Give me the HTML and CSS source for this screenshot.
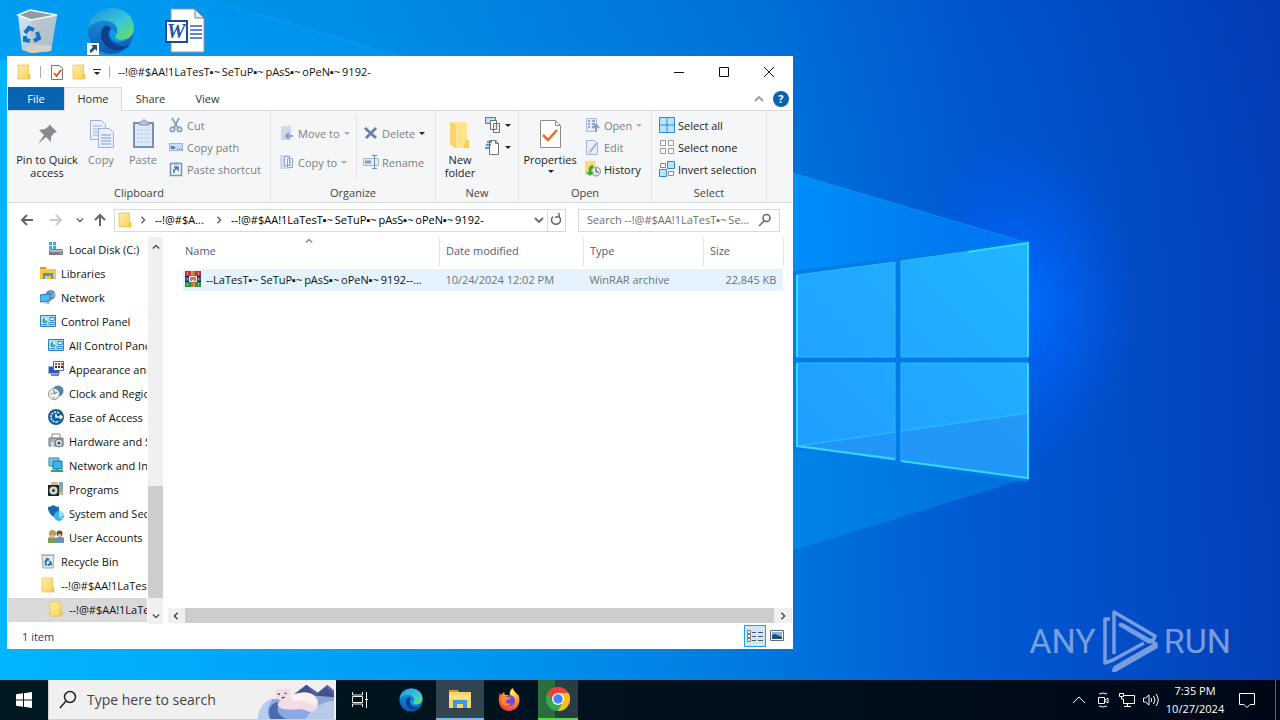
FILE: index.html
```html
<!DOCTYPE html>
<html lang="en">
<head>
<meta charset="utf-8">
<title>File Explorer</title>
<link rel="stylesheet" href="styles.css">
</head>
<body>
<svg width="0" height="0" class="defs" aria-hidden="true">
  <defs>
    <linearGradient id="gEdgeA" x1="0" y1="0" x2="1" y2="1"><stop offset="0" stop-color="#1a8fd8"/><stop offset=".55" stop-color="#36c6e0"/><stop offset="1" stop-color="#6be04a"/></linearGradient>
    <linearGradient id="gEdgeB" x1="0" y1="0" x2="0" y2="1"><stop offset="0" stop-color="#1d9be6"/><stop offset="1" stop-color="#0d58ae"/></linearGradient>
    <linearGradient id="gFold" x1="0" y1="0" x2="1" y2="1"><stop offset="0" stop-color="#ffeda0"/><stop offset="1" stop-color="#f8d160"/></linearGradient>
    <radialGradient id="gFox" cx=".65" cy=".2" r=".9"><stop offset="0" stop-color="#fff04a"/><stop offset=".45" stop-color="#ff9a26"/><stop offset="1" stop-color="#f5264f"/></radialGradient>
    <linearGradient id="gBin" x1="0" y1="0" x2="1" y2="1"><stop offset="0" stop-color="#eef3f6"/><stop offset="1" stop-color="#a9b8c2"/></linearGradient>
  </defs>
  <symbol id="folder" viewBox="0 0 16 16"><path d="M2 1h10.500v9.500H14V15H2z" fill="url(#gFold)" stroke="#e6bd4b" stroke-width=".7"/><path d="M12 10.500h2V15h-3z" fill="#f2c44d"/></symbol>
  <symbol id="edge" viewBox="0 0 48 48">
    <circle cx="24" cy="24" r="23" fill="url(#gEdgeB)"/>
    <path d="M1 22C3 8 13 1 25 1c13 0 22 9 22 20 0 8-6 12-13 12-6 0-7-3-5-5 3-4 1-13-9-14C11 13 3 17 1 22z" fill="url(#gEdgeA)"/>
    <path d="M18 19c-7 5-5 18 6 23 8 3 15 0 19-4-8 3-19 0-21-8-1-4 0-7 2-8-1-2-3-4-6-3z" fill="#0c3f8f"/>
    <path d="M29 28c-2 2-1 5 5 5 2 0 4 0 7-2-3 5-14 6-17 0-2-4-1-8 1-9 3 1 5 3 4 6z" fill="#0a9bea"/>
  </symbol>
  <symbol id="chev" viewBox="0 0 10 10"><path d="M1 3l4 4 4-4" fill="none" stroke="currentColor" stroke-width="1.8"/></symbol>
  <symbol id="panel" viewBox="0 0 16 16"><path d="M.5 2.500h15v11H.5z" fill="#a6e1fb" stroke="#2a7fb8"/><circle cx="5" cy="7.500" r="2.500" fill="#4a9f86"/><path d="M5 7.500V5A2.500 2.500 0 0 1 7.500 7.500z" fill="#fff"/><path d="M10 4.500h4v3h-4zM9 9.500h5v2H9zM2 11.500h5" stroke="#2a8fcb" fill="#eaffff"/></symbol>
</svg>

<main class="desktop">
  <svg class="wallpaper" viewBox="0 0 1280 720" preserveAspectRatio="xMidYMid slice" aria-hidden="true">
    <defs>
      <linearGradient id="wBase"><stop offset="0" stop-color="#00a6f8"/><stop offset=".3" stop-color="#0094ec"/><stop offset=".6" stop-color="#0074dc"/><stop offset=".76" stop-color="#0057d2"/><stop offset="1" stop-color="#033ab6"/></linearGradient>
      <linearGradient id="wBottom" x1="0" y1="0" x2="0" y2="1"><stop offset="0" stop-color="#0040b0" stop-opacity=".1"/><stop offset=".5" stop-color="#00a0ff" stop-opacity=".04"/><stop offset="1" stop-color="#00c0ff" stop-opacity=".04"/></linearGradient>
      <linearGradient id="wLeft"><stop offset="0" stop-color="#00baff" stop-opacity=".9"/><stop offset=".5" stop-color="#00a8ff" stop-opacity=".5"/><stop offset="1" stop-color="#0090ff" stop-opacity="0"/></linearGradient>
      <radialGradient id="wGlow"><stop offset="0" stop-color="#006dff"/><stop offset=".4" stop-color="#0067ff" stop-opacity=".6"/><stop offset="1" stop-color="#005cf0" stop-opacity="0"/></radialGradient>
      <linearGradient id="wBeam"><stop offset="0" stop-color="#00a4ff" stop-opacity=".1"/><stop offset=".4" stop-color="#00a0ff" stop-opacity=".3"/><stop offset=".77" stop-color="#0094ff" stop-opacity=".85"/><stop offset="1" stop-color="#0088ff" stop-opacity=".5"/></linearGradient>
      <linearGradient id="wShade"><stop offset=".3" stop-color="#006fcb" stop-opacity="0"/><stop offset="1" stop-color="#006fcb" stop-opacity=".5"/></linearGradient>
      <linearGradient id="wPane" x1="0" y1="1" x2="1" y2="0"><stop offset="0" stop-color="#1f9cff"/><stop offset="1" stop-color="#21b5ff"/></linearGradient>
    </defs>
    <path d="M0 0h1280v720H0z" fill="url(#wBase)"/>
    <path d="M0 0h1280v720H0z" fill="url(#wBottom)"/>
    <path d="M0 60h12v580h788v80H0z" fill="url(#wLeft)"/>
    <ellipse cx="1020" cy="305" rx="115" ry="170" fill="url(#wGlow)"/>
    <path d="M1028 243L210 0H0v720h240L1028 478z" fill="url(#wBeam)"/>
    <path d="M1028 243L210 0" stroke="#24aaff" stroke-opacity=".4"/>
    <path d="M797 446L1028 478 240 720H0v-80z" fill="url(#wShade)"/>
    <path d="M793 271L1028 240V482L793 450z" fill="#007ce8"/>
    <g fill="url(#wPane)" stroke="#32b7ff"><path d="M797 275l98-13v95h-98zM901 261l127-18v114H901zM797 363h98v97l-98-14zM901 363h127v115l-127-17z"/></g>
    <path d="M797 446l98-14v28zM901 431l127-18v65l-127-17z" fill="#2492f4" fill-opacity=".75"/>
    <path d="M797 446l98-14M901 431l127-18" stroke="#27b8ff" stroke-width="1.500"/>
    <path d="M797 357v-82M797 363v83l98 13M901 461l127 17V363M1028 357V243l-60 9" fill="none" stroke="#35d9ff" stroke-width="2"/>
  </svg>

  <div class="shortcuts">
    <button class="shortcut" aria-label="Recycle Bin"><svg viewBox="0 0 48 48"><path d="M5 8l12-5 27 5-6 36-20 2-9-3z" fill="url(#gBin)" fill-opacity=".9"/><path d="M18 13l26-5-6 36-20 2z" fill="#b6c1c9" fill-opacity=".7"/><path d="M5 8l12-5 27 5-26 5z" fill="#8d9da8" stroke="#f7fafc" stroke-width="1.500"/><path d="M11 42l8-5 20 2-1 5-20 2z" fill="#d7cec4"/><g fill="none" stroke="#1770c4" stroke-width="4"><path d="M12 26l4-5 5 2M24 25l2 6-5 3M17 34l-5-1 0-4"/></g></svg></button>
    <button class="shortcut" aria-label="Microsoft Edge"><svg viewBox="0 0 48 48"><use href="#edge"/><path d="M0 36h12v12H0z" fill="#fff"/><path d="M3 46v-3l3-3-2-2h6v6l-2-2-3 3z" fill="#264a91"/></svg></button>
    <button class="shortcut" aria-label="Word document"><svg viewBox="0 0 48 48"><path d="M10 2h24l9 9v34H10z" fill="#fff" stroke="#8d9aa8"/><path d="M34 2v9h9z" fill="#e4e9ef" stroke="#718090"/><path d="M29 19h12M29 23h12M29 27h12M29 31h12" stroke="#2d63bd" stroke-width="1.500"/><path d="M5 14h21v21H5z" fill="#fff" stroke="#1c4b9d" stroke-width="2"/><text x="15" y="31" class="word">W</text></svg></button>
  </div>

  <div class="brand" aria-label="ANY RUN"><span>ANY</span><svg viewBox="0 0 56 62"><g fill="none" stroke="currentColor" stroke-width="3.500" stroke-linejoin="round"><path d="M8 9H3v44l8-3 31-17M12 44V2l41 24-1 3-5 3L17 14M12 58l42-24-35-20M12 58v3l42-24v-4"/></g></svg><span>RUN</span></div>

  <section class="window" aria-label="File Explorer">
    <header class="titlebar">
      <svg class="i16"><use href="#folder"/></svg><i class="bar"></i>
      <svg class="i16" viewBox="0 0 16 16"><path d="M2.500 1.500h8l3 3v11h-11z" fill="#fff" stroke="#777"/><path d="M5 9l2.500 3L12 6" fill="none" stroke="#e0532a" stroke-width="1.800"/></svg>
      <svg class="i16"><use href="#folder"/></svg>
      <svg class="i8" viewBox="0 0 8 8"><path d="M0 1.500h8" stroke="#222"/><path d="M1 4h6L4 7z" fill="#222"/></svg><i class="bar"></i>
      <h1>--!@#$AA!1LaTesT▪~&thinsp;SeTuP▪~&thinsp;pAsS▪~&thinsp;oPeN▪~&thinsp;9192-</h1>
      <div class="caption">
        <button aria-label="Minimize"><svg viewBox="0 0 12 12"><path d="M1 6.500h10"/></svg></button>
        <button aria-label="Maximize"><svg viewBox="0 0 12 12"><path d="M1.500 1.500h9v9h-9z"/></svg></button>
        <button aria-label="Close"><svg viewBox="0 0 12 12"><path d="M1 1l10 10M11 1L1 11"/></svg></button>
      </div>
    </header>

    <nav class="tabs">
      <button class="file">File</button><button class="on">Home</button><button>Share</button><button>View</button>
      <span class="tabtools"><button aria-label="Collapse ribbon"><svg class="i10 flip"><use href="#chev"/></svg></button><button class="help" aria-label="Help">?</button></span>
    </nav>

    <div class="ribbon">
      <section class="group clip">
        <div class="tools">
          <button class="big pin"><svg viewBox="0 0 32 32"><path d="M18 6l8 8-3 1-3 4v5l-5-5-8 7 6-9-5-5 6-1 4-3z" fill="#858b91"/></svg><span>Pin to Quick<br>access</span></button>
          <button class="big off"><svg viewBox="0 0 32 32"><g fill="#e9f0fb" stroke="#9fb2d2"><path d="M5.500 2.500h11l4 4v15h-15z"/><path d="M8 8h9M8 11h9M8 14h5M8 17h5"/><path d="M13.500 10.500h11l4 4v15h-15z"/><path d="M16 17h10M16 20h10M16 23h10M16 26h10" stroke="#7f9acb"/></g></svg><span>Copy</span></button>
          <button class="big off"><svg viewBox="0 0 32 32"><path d="M7 5h19v24H7z" fill="#dce7f7" stroke="#7890b8" stroke-width="2"/><path d="M12 7V4h3c0-3 4-3 4 0h3v3z" fill="#b8c5da" stroke="#8495b3"/><path d="M10 12h13M10 16h13M10 20h13M10 24h13" stroke="#c0d1ec"/></svg><span>Paste</span></button>
          <div class="col">
            <button class="small off"><svg class="i16" viewBox="0 0 16 16"><g fill="none" stroke="#8c9db9" stroke-width="1.700"><path d="M4 1l6 10M11 1L6 11"/><circle cx="4.500" cy="12.500" r="2.200"/><circle cx="11.500" cy="12.500" r="2.200"/></g></svg>Cut</button>
            <button class="small off"><svg class="i16" viewBox="0 0 16 16"><path d="M1.500 4.500h13v7h-13z" fill="#cbdcf3" stroke="#9db3d9"/><path d="M3 7l1 3 1-3 1 3 1-2M9 10h1M11 10h1M13 10h1" fill="none" stroke="#436cae"/></svg>Copy path</button>
            <button class="small off"><svg class="i16" viewBox="0 0 16 16"><path d="M2.500 2.500h11v12h-11z" fill="#eef4fc" stroke="#7890bd" stroke-width="1.500"/><path d="M6 1h4v3H6z" fill="#9dadc9"/><path d="M6 12V9l3-2M6 6h4v4" fill="none" stroke="#476ba9" stroke-width="1.500"/></svg>Paste shortcut</button>
          </div>
        </div><h2>Clipboard</h2>
      </section>
      <section class="group org">
        <div class="tools">
          <div class="col wide">
            <button class="small off"><svg class="i16" viewBox="0 0 16 16"><path d="M2 1h10v14H2z" fill="#ced9ec"/><path d="M14 11H8M10 8l-3 3 3 3" fill="none" stroke="#8b9fc4" stroke-width="2"/></svg>Move to <i class="drop"></i></button>
            <button class="small off"><svg class="i16" viewBox="0 0 16 16"><path d="M1 1h10v14H1z" fill="#ced9ec"/><path d="M5.500 2.500h5v9h-5zM8.500 4.500h5v9h-5zM10 7h2M10 9h2M10 11h2" fill="#f2f6ff" stroke="#8fa4cd"/></svg>Copy to <i class="drop"></i></button>
          </div>
          <div class="col wide lined">
            <button class="small off"><svg class="i16" viewBox="0 0 16 16"><path d="M2 3l11 10M13 3L3 13" stroke="#6680ab" stroke-width="2.800"/></svg>Delete <i class="drop dark"></i></button>
            <button class="small off"><svg class="i16" viewBox="0 0 16 16"><path d="M.5 4.500h15v7H.5z" fill="#e2eaf7" stroke="#a6b8d9"/><path d="M2 8h6" stroke="#829bc8" stroke-width="3"/><path d="M9 1.500h5M11.500 1.500v13M9 14.500h5" stroke="#748fbd" fill="none"/></svg>Rename</button>
          </div>
        </div><h2>Organize</h2>
      </section>
      <section class="group new">
        <div class="tools">
          <button class="big"><svg viewBox="0 0 32 32"><path d="M6 4h17v18h2v8H11l-5-3z" fill="#ffe490"/><path d="M6 4l6 3v23l-6-4z" fill="#f8d36b"/><path d="M22 22l3 1v7h-6z" fill="#f8cc58"/></svg><span>New<br>folder</span></button>
          <div class="col icons">
            <button class="small" aria-label="New item"><svg class="i16" viewBox="0 0 16 16"><path d="M.5.500h10v6H.5z" fill="#bfe1f4" stroke="#527b98"/><path d="M5.500 3.500h6v9h-6zM8.500 6.500h6v9h-6z" fill="#fff" stroke="#6b6f75"/><path d="M10 9h3M10 12h3" stroke="#d78c78"/></svg><i class="drop dark"></i></button>
            <button class="small" aria-label="Easy access"><svg class="i16" viewBox="0 0 16 16"><path d="M4.500 1.500h6l3 3v11h-9z" fill="#fff" stroke="#6b747c"/><path d="M10.500 1.500v3h3" fill="none" stroke="#6b747c"/><path d="M2 3h5M1 6h5M0 9h4" stroke="#2679b4" stroke-width="1.500"/></svg><i class="drop dark"></i></button>
          </div>
        </div><h2>New</h2>
      </section>
      <section class="group open">
        <div class="tools">
          <button class="big prop"><svg viewBox="0 0 32 32"><path d="M6.500 2.500h15l5 5v22h-20z" fill="#fff" stroke="#8c8c8c"/><path d="M21.500 2.500v5h5" fill="none" stroke="#8c8c8c"/><path d="M9 17l5 5 9-10" fill="none" stroke="#ed672b" stroke-width="2.500"/></svg><span>Properties<br><i class="drop dark"></i></span></button>
          <div class="col">
            <button class="small off"><svg class="i16" viewBox="0 0 16 16"><path d="M1.500 1.500h10v13h-10z" fill="#e5ecf9" stroke="#a9b9da"/><path d="M3 4h2M3 7h2M3 10h2M7 4h3M7 7h3M7 10h2" stroke="#758fc2" stroke-width="1.500"/><path d="M11 15V9M8 11l3-3 3 3" fill="none" stroke="#8c9dc5" stroke-width="2"/></svg>Open <i class="drop"></i></button>
            <button class="small off"><svg class="i16" viewBox="0 0 16 16"><path d="M1.500 1.500h8l3 3v11h-11z" fill="#e9effa" stroke="#a4b4d4"/><path d="M13 4L6 13l-2 2 1-4 7-8z" fill="#9aadd4"/></svg>Edit</button>
            <button class="small"><svg class="i16" viewBox="0 0 16 16"><path d="M0 0h10v14H0z" fill="#ffda6b"/><circle cx="11" cy="10.500" r="4.500" fill="#e4e8eb" stroke="#858b91"/><path d="M11 7v4h3" fill="none" stroke="#555"/><path d="M8 4C4 4 3 8 4 11H1l4 4 4-4H6c0-3 1-4 2-4z" fill="#31a945"/></svg>History</button>
          </div>
        </div><h2>Open</h2>
      </section>
      <section class="group select">
        <div class="tools"><div class="col">
          <button class="small"><svg class="i16" viewBox="0 0 16 16"><path d="M.5.500h15v15H.5zM8 0v16M0 8h16" fill="#b9e3ff" stroke="#2e8bcb"/></svg>Select all</button>
          <button class="small"><svg class="i16" viewBox="0 0 16 16"><path d="M1.500 1.500h5v5h-5zM9.500 1.500h5v5h-5zM1.500 9.500h5v5h-5zM9.500 9.500h5v5h-5z" fill="#fff" stroke="#999"/></svg>Select none</button>
          <button class="small"><svg class="i16" viewBox="0 0 16 16"><path d="M1.500 2.500h5v4h-5zM9.500 10.500h5v4h-5z" fill="#fff" stroke="#888"/><path d="M8.500.500h7v7h-7zM.5 8.500h7v7h-7z" fill="#b9e3ff" stroke="#2e8bcb"/></svg>Invert selection</button>
        </div></div><h2>Select</h2>
      </section>
    </div>

    <div class="address">
      <button class="back" aria-label="Back"><svg class="i14" viewBox="0 0 14 14"><path d="M13 7H2M7 2L2 7l5 5"/></svg></button>
      <button class="faint" aria-label="Forward"><svg class="i14" viewBox="0 0 14 14"><path d="M1 7h11M7 2l5 5-5 5"/></svg></button>
      <button class="thin" aria-label="Recent"><svg class="i8"><use href="#chev"/></svg></button>
      <button class="up" aria-label="Up"><svg class="i14" viewBox="0 0 14 14"><path d="M7 13V2M2 7l5-5 5 5"/></svg></button>
      <div class="crumbs">
        <svg class="i16"><use href="#folder"/></svg><svg class="i8 side"><use href="#chev"/></svg>
        <button>--!@#$A...</button><svg class="i8 side"><use href="#chev"/></svg>
        <button>--!@#$AA!1LaTesT▪~&thinsp;SeTuP▪~&thinsp;pAsS▪~&thinsp;oPeN▪~&thinsp;9192-</button>
        <svg class="i10 end"><use href="#chev"/></svg>
        <button class="refresh" aria-label="Refresh"><svg class="i14" viewBox="0 0 14 14"><path d="M10 3.500a4.500 4.500 0 1 1-6 0M10 0v4H6"/></svg></button>
      </div>
      <label class="find"><input type="text" aria-label="Search folder" placeholder="Search --!@#$AA!1LaTesT▪~&thinsp;Se..."><svg class="i14" viewBox="0 0 14 14"><circle cx="8.500" cy="5" r="3.500"/><path d="M6 8l-5 5"/></svg></label>
    </div>

    <div class="body">
      <nav class="tree">
        <ul>
          <li class="sub"><a href="#"><svg class="i16" viewBox="0 0 16 16"><path d="M1 1h3v3H1zM5 1h3v3H5zM1 5h3v3H1zM5 5h3v3H5z" fill="#26b7ea"/><path d="M1 9l2-1h11l1 2v4H1z" fill="#777d82"/><path d="M2 9h12v2H2z" fill="#b6bbc0"/><path d="M11 12h3v1h-3z" fill="#65e48c"/></svg>Local Disk (C:)</a></li>
          <li><a href="#"><svg class="i16" viewBox="0 0 16 16"><path d="M0 2h6l1 2h9v10H0z" fill="#fac83e"/><path d="M0 2h6v2H0z" fill="#dd9a22"/><path d="M3 8h10v6h-2v-3H5v3H3z" fill="#4d92dc"/></svg>Libraries</a></li>
          <li><a href="#"><svg class="i16" viewBox="0 0 16 16"><circle cx="10.500" cy="6" r="5" fill="#5b8fbc"/><path d="M9 1l3 3 3 1M8 7h7" stroke="#a7cce8"/><path d="M0 6l10-1v7L0 13z" fill="#51b9f2" stroke="#3277a7"/><path d="M3 14l6-1v2z" fill="#7babc9"/></svg>Network</a></li>
          <li><a href="#"><svg class="i16"><use href="#panel"/></svg>Control Panel</a></li>
          <li class="sub"><a href="#"><svg class="i16"><use href="#panel"/></svg>All Control Panel Items</a></li>
          <li class="sub"><a href="#"><svg class="i16" viewBox="0 0 16 16"><path d="M.5 5.500h11v7H.5z" fill="#2855cf" stroke="#a2b4d4"/><path d="M5.500.500h10v9h-10z" fill="#fff" stroke="#52698b"/><path d="M7 3h2M10 3h2M13 3h2" stroke="#d74a38" stroke-width="2"/><path d="M7 6h2M10 6h2M13 6h2" stroke="#333" stroke-width="2"/><path d="M3 14h8" stroke="#7187b6" stroke-width="2"/></svg>Appearance and Personalization</a></li>
          <li class="sub"><a href="#"><svg class="i16" viewBox="0 0 16 16"><circle cx="10" cy="6" r="5.500" fill="#4e83ad"/><circle cx="6" cy="9" r="5.500" fill="#eef1f3" stroke="#8d979e"/><path d="M6 5v4l3-2M3 9h1M6 12v1" fill="none" stroke="#566"/></svg>Clock and Region</a></li>
          <li class="sub"><a href="#"><svg class="i16" viewBox="0 0 16 16"><circle cx="8" cy="8" r="8" fill="#125e9f"/><path d="M11 4a5 5 0 1 0 0 8" fill="none" stroke="#fff" stroke-width="1.500" stroke-dasharray="2 1"/><path d="M8 5v3h6M12 6l2 2-2 2" fill="none" stroke="#fff" stroke-width="1.500"/></svg>Ease of Access</a></li>
          <li class="sub"><a href="#"><svg class="i16" viewBox="0 0 16 16"><path d="M4 1h8v5H4z" fill="#fff" stroke="#888"/><path d="M1 5h14v8H1z" fill="#a9b0b5" stroke="#6f777d"/><circle cx="11" cy="10" r="4" fill="#d6dade" stroke="#687079"/><circle cx="11" cy="10" r="1.500" fill="#456"/><path d="M3 9h3v5H3z" fill="#d9dde0"/></svg>Hardware and Sound</a></li>
          <li class="sub"><a href="#"><svg class="i16" viewBox="0 0 16 16"><path d="M1 1h10v8H1z" fill="#76cbed" stroke="#2f83b4"/><path d="M5 4h9v8H5z" fill="#3ab6ef" stroke="#176c9b"/><path d="M3 14h12M9 12v3" stroke="#23ad55" stroke-width="2"/></svg>Network and Internet</a></li>
          <li class="sub"><a href="#"><svg class="i16" viewBox="0 0 16 16"><path d="M3 1h7v3h5v10H3z" fill="#dbb987"/><path d="M11 1h4v10h-4z" fill="#86a6ba"/><path d="M0 4h11v11H0z" fill="#1d2b28"/><circle cx="5.500" cy="9.500" r="4" fill="#d5dcd8"/><circle cx="5.500" cy="9.500" r="1.500" fill="#334"/></svg>Programs</a></li>
          <li class="sub"><a href="#"><svg class="i16" viewBox="0 0 16 16"><path d="M0 2q3 0 5-2 3 2 6 2v4q-1 5-5 6Q1 9 0 4z" fill="#1768b2"/><circle cx="11" cy="11" r="5" fill="#36b5eb"/><path d="M11 11V6a5 5 0 0 1 5 5z" fill="#8ee2fa"/><path d="M11 11l4 3" stroke="#fff"/></svg>System and Security</a></li>
          <li class="sub"><a href="#"><svg class="i16" viewBox="0 0 16 16"><circle cx="4.500" cy="4.500" r="3.500" fill="#c39a58"/><circle cx="11.500" cy="4.500" r="3" fill="#674a37"/><path d="M0 14V9q4-3 8 0v5z" fill="#7b9a5b"/><path d="M8 14V9q4-3 8 0v5z" fill="#6a93b9"/><path d="M3 6h3v3H3zM10 5h3v3h-3z" fill="#e8b794"/></svg>User Accounts</a></li>
          <li><a href="#"><svg class="i16" viewBox="0 0 16 16"><path d="M2 2h12l-1 13H3z" fill="#e0e7eb" stroke="#9aa7af"/><path d="M1 2h14" stroke="#a4aeb5"/><path d="M5 10l2-4 2 1M10 8l1 3-3 1M5 11l2 1" fill="none" stroke="#1c70be" stroke-width="2"/></svg>Recycle Bin</a></li>
          <li><a href="#"><svg class="i16"><use href="#folder"/></svg>--!@#$AA!1LaTesT</a></li>
          <li class="sub current"><a href="#"><svg class="i16"><use href="#folder"/></svg>--!@#$AA!1LaTesT</a></li>
        </ul>
        <div class="vscroll" aria-hidden="true"><svg class="i8 flip"><use href="#chev"/></svg><div class="vthumb"></div><svg class="i8"><use href="#chev"/></svg></div>
      </nav>
      <div class="listing">
        <table>
          <colgroup><col class="cname"><col class="cdate"><col class="ctype"><col class="csize"></colgroup>
          <thead><tr><th>Name<svg class="i8 sort flip"><use href="#chev"/></svg></th><th>Date modified</th><th>Type</th><th>Size</th></tr></thead>
          <tbody><tr>
            <td><span class="name"><svg class="i16" viewBox="0 0 16 16"><path d="M0 0h16v5H0z" fill="#c43332"/><path d="M0 5h16v5H0z" fill="#3c4db2"/><path d="M0 10h16v6H0z" fill="#2f9146"/><path d="M0 5.500h16M0 10.500h16" stroke="#223"/><path d="M6 0h4v16H6z" fill="#b97530"/><path d="M7 0v4M9 12v4" stroke="#efc16f"/><path d="M2.500 1v3M13.500 1v3M2.500 7v2M13.500 7v2M2.500 12v3M13.500 12v3" stroke="#e5b9a0" stroke-opacity=".7"/><path d="M4 5h8v6H4z" fill="#f4e5df"/><path d="M6 6v4M10 6v4M8 6v3" stroke="#d44b42" stroke-width="1.500"/></svg>--LaTesT▪~&thinsp;SeTuP▪~&thinsp;pAsS▪~&thinsp;oPeN▪~&thinsp;9192--...</span></td>
            <td>10/24/2024 12:02 PM</td><td>WinRAR archive</td><td class="num">22,845 KB</td>
          </tr></tbody>
        </table>
        <div class="hscroll" aria-hidden="true"><svg class="i8 left"><use href="#chev"/></svg><div class="hthumb"></div><svg class="i8 side"><use href="#chev"/></svg></div>
      </div>
    </div>

    <footer class="status"><span>1 item</span>
      <button class="chosen" aria-label="Details view"><svg class="i16" viewBox="0 0 16 16"><path d="M.5 2.500h3v3h-3zM.5 6.500h3v3h-3zM.5 10.500h3v3h-3z" fill="#fff" stroke="#777"/><path d="M5 4.500h4M11 4.500h5M5 8.500h4M11 8.500h5M5 12.500h4M11 12.500h5" stroke="#555"/></svg></button>
      <button aria-label="Large icons view"><svg class="i14" viewBox="0 0 14 14"><path d="M.5 1.500h13v10H.5z" fill="#fff" stroke="#668"/><path d="M2 3h10v7H2z" fill="#83b8df"/><path d="M2 6l3-1 7 3v2H2z" fill="#1b5070"/></svg></button>
    </footer>
  </section>
</main>

<footer class="taskbar">
  <button class="start" aria-label="Start"><svg class="i16" viewBox="0 0 16 16"><path d="M0 2.200L7 1.300v6.200H0zM8 1.200L16 0v7.500H8zM0 8.500h7v6.200l-7-.9zM8 8.500h8V16l-8-1.200z" fill="#fff"/></svg></button>
  <label class="tasksearch"><svg class="i20" viewBox="0 0 20 20"><circle cx="11" cy="7" r="5.500"/><path d="M7 11l-6 7"/></svg><input type="text" aria-label="Search" placeholder="Type here to search">
    <svg class="bear" viewBox="0 0 80 40"><path d="M39 13L51 4l12 8 10-8 7 6v30H39z" fill="#5568ad"/><path d="M39 14l12-10 9 11 12-9 8 9v10H40z" fill="#43508f"/><path d="M40 20l15-5 25 2v23H40z" fill="#90a4d8"/><path d="M0 40C1 24 13 17 22 19c14 3 23 10 58 8v13z" fill="#8ba9e4"/><path d="M13 40C8 27 17 20 25 23c-8 5-4 14 5 17z" fill="#4e6bad"/><path d="M0 40C1 28 7 21 15 20 9 28 9 36 13 40z" fill="#b8cbf2"/><path d="M58 29q12-8 22-8v19H50z" fill="#b9cae9"/><path d="M18 11q1-5 5-2l8-1q4-1 3 3l-1 6c10-6 22-7 28 0 6 8 0 17-8 15-8-5-17 0-28-3-6-3-5-6-1-8-4-2-6-5-6-10z" fill="#f3dce5"/><path d="M36 15c9-4 20-4 24 2 3 6 1 10-5 7-5-5-12-3-19-3z" fill="#fff0ee"/><path d="M21 14h2M28 13h2M25 18l3-1" stroke="#42365f" stroke-width="1.500"/></svg></label>
  <div class="apps">
    <button class="taskview" aria-label="Task View"><svg class="i20" viewBox="0 0 20 20"><path d="M2.500 2v3h10V2M2.500 17v-3h10v3M2.500 6.500h10v6h-10zM16.500 2v16M15 9.500h3" fill="none" stroke="#eee"/></svg></button>
    <button aria-label="Microsoft Edge"><svg class="i24"><use href="#edge"/></svg></button>
    <button class="active" aria-label="File Explorer"><svg class="i24" viewBox="0 0 24 24"><path d="M1 3h8l2 2h12v16H1z" fill="#fbd263"/><path d="M1 3h8l2 2H1z" fill="#d89b2a"/><path d="M5 21v-8h14v8h-4v-4H9v4z" fill="#3e99d8"/><path d="M1 8h22v4H1z" fill="#ffe08b"/></svg></button>
    <button aria-label="Firefox"><svg class="i24" viewBox="0 0 24 24"><path d="M3 5l1 2 3-3 1 3 5 0c-1-3 1-6 3-7 0 3 4 5 6 8 2 9-3 15-10 15S-1 16 3 5z" fill="url(#gFox)"/><circle cx="12.500" cy="12.500" r="5.500" fill="#7548d4"/><path d="M5 8c4 0 5 2 9 1-1 3-4 2-5 4s2 4 5 2c-2 5-9 3-10-2z" fill="#ff8a24"/></svg></button>
    <button class="chrome" aria-label="Chrome"><svg class="i24" viewBox="0 0 24 24"><circle cx="12" cy="12" r="12" fill="#35a853"/><path d="M1.600 6A12 12 0 0 1 22.400 6H12L7 15z" fill="#ea4335"/><path d="M22.400 6A12 12 0 0 1 12 24l5-9-5-9z" fill="#fbc116"/><circle cx="12" cy="12" r="6" fill="#fff"/><circle cx="12" cy="12" r="4.700" fill="#4285f4"/></svg></button>
  </div>
  <div class="tray">
    <button aria-label="Hidden icons"><svg viewBox="0 0 16 16"><path d="M2 11l6-6 6 6"/></svg></button>
    <button aria-label="Meet now"><svg viewBox="0 0 16 16"><path d="M3.500 5.500h6v6h-6zM10 8l3-2v5l-3-2M4 2q4-2 8 0M4 14q4 2 8 0"/></svg></button>
    <button aria-label="Network"><svg viewBox="0 0 16 16"><path d="M5 3.500h10.500v8H4.500V7M8.500 12v2.500M5 14.500h7M.5 1.500h4v3h-4zM2.500 5v2h2"/></svg></button>
    <button aria-label="Volume"><svg viewBox="0 0 16 16"><path d="M.5 6h2L6 3v10l-3.500-3h-2zM8 6q1.500 2 0 4M10.500 4q3 4 0 8M13 2q4.500 6 0 12"/></svg></button>
    <time>7:35 PM<br>10/27/2024</time>
    <button class="note" aria-label="Notifications"><svg viewBox="0 0 16 16"><path d="M.5 1.500h15v11H11L8 15.500 5 12.500H.5z"/></svg></button>
    <i class="peek"></i>
  </div>
</footer>
</body>
</html>
```
FILE: styles.css
```css
* { box-sizing: border-box; }
body {
  margin: 0;
  height: 100vh;
  display: flex;
  flex-direction: column;
  overflow: hidden;
  font-family: "Open Sans", "Noto Sans", sans-serif;
  font-size: 11px;
  line-height: 13px;
  color: #111;
}
button, input { font: inherit; color: inherit; background: none; border: 0; padding: 0; margin: 0; }
button { white-space: nowrap; }
h1, h2 { font: inherit; margin: 0; }
ul { list-style: none; margin: 0; padding: 0; }
a { color: inherit; text-decoration: none; }
svg { flex: none; display: block; }
.defs { position: absolute; }
.i8 { width: 8px; height: 8px; }
.i10 { width: 10px; height: 10px; }
.i14 { width: 14px; height: 14px; }
.i16 { width: 16px; height: 16px; }
.i20 { width: 20px; height: 20px; }
.i24 { width: 24px; height: 24px; }
.flip { transform: rotate(180deg); }
.side { transform: rotate(-90deg); }
.left { transform: rotate(90deg); }

.desktop { position: relative; flex: 1; min-height: 0; background: #0094ec; }
.wallpaper { position: absolute; left: 0; top: 0; width: 100vw; height: 100vh; }
.shortcuts { position: relative; display: flex; gap: 26px; padding: 7px 13px; }
.shortcut svg { width: 48px; height: 48px; }
.word { font: italic 700 21px "Liberation Serif", serif; fill: #2055ad; text-anchor: middle; }
.brand { position: absolute; right: 49px; bottom: 8px; display: flex; align-items: center; gap: 6px; color: #a4bde8; opacity: .72; font: 34px/62px "Roboto", sans-serif; }
.brand svg { width: 56px; height: 62px; }

.window { position: absolute; left: 7px; top: 56px; bottom: 31px; width: 61.4%; background: #fff; border: 1px solid #fff; border-top: 0; display: flex; flex-direction: column; }
.titlebar { display: flex; align-items: center; height: 31px; padding-left: 8px; gap: 6px; flex: none; }
.titlebar .bar { width: 1px; height: 12px; background: #aaa; margin: 0 2px; }
.titlebar h1 { font-size: 11px; white-space: nowrap; }
.caption { margin-left: auto; display: flex; }
.caption button { width: 45px; height: 31px; display: grid; place-items: center; }
.caption svg { width: 12px; height: 12px; fill: none; stroke: #111; }

.tabs { display: flex; height: 24px; flex: none; border-bottom: 1px solid #dadbdc; }
.tabs > button { width: 57px; height: 24px; color: #333; padding-bottom: 2px; }
.tabs .file { background: #0863b1; color: #fff; height: 23px; width: 56px; padding-bottom: 0; }
.tabs .on { background: #f5f6f7; border: 1px solid #dadbdc; border-bottom: 0; width: 58px; }
.tabtools { margin-left: auto; display: flex; align-items: center; gap: 9px; padding-right: 3px; color: #999; }
.tabs .help { width: 16px; height: 16px; border-radius: 50%; background: #0863b1; color: #fff; font-weight: 700; }

.ribbon { display: flex; height: 92px; flex: none; background: #f5f6f7; border-bottom: 1px solid #dadbdc; }
.group { display: flex; flex-direction: column; border-right: 1px solid #e2e3e4; flex: none; color: #222; }
.group h2 { text-align: center; color: #444; height: 16px; }
.tools { flex: 1; display: flex; padding-top: 3px; }
.clip { width: 263px; }
.org { width: 165px; }
.new { width: 83px; }
.open { width: 133px; }
.select { width: 115px; }
.big { width: 42px; display: flex; flex-direction: column; align-items: center; padding-top: 4px; }
.big svg { width: 32px; height: 32px; margin-bottom: 3px; }
.big.pin { width: 72px; padding-left: 6px; }
.big.prop { width: 62px; }
.new .big { width: 48px; }
.off { color: #7c7f83; }
.col { display: flex; flex-direction: column; padding-left: 4px; }
.small { display: flex; align-items: center; gap: 3px; height: 22px; }
.wide { padding: 8px 0 0 8px; gap: 7px; width: 85px; }
.lined { border-left: 1px solid #e2e3e4; width: 79px; padding-left: 6px; margin-bottom: 5px; }
.icons { padding-left: 1px; }
.select .col { padding-left: 7px; }
.drop { display: inline-block; border: 3px solid transparent; border-top-color: #a9abad; border-bottom: 0; margin-left: 1px; }
.drop.dark { border-top-color: #222; }
.prop .drop { vertical-align: 4px; }

.address { display: flex; align-items: center; height: 34px; flex: none; padding: 0 12px 0 4px; color: #666; }
.address svg { fill: none; stroke: #666; stroke-width: 2; }
.address > button { width: 29px; display: grid; place-items: center; }
.address > .faint { opacity: .35; }
.address > .thin { width: 19px; }
.address > .up { width: 22px; }
.address use { stroke: none; }
.crumbs { flex: 1; display: flex; align-items: center; height: 23px; border: 1px solid #d9d9d9; margin: 0 12px 0 3px; padding-left: 2px; gap: 3px; color: #000; min-width: 0; }
.crumbs button { min-width: 54px; text-align: left; padding-bottom: 1px; }
.crumbs .i8, .crumbs .i10 { color: #666; }
.crumbs .side { margin: 0 5px 0 3px; }
.crumbs .end { margin-left: auto; }
.crumbs .refresh { width: 18px; min-width: 18px; height: 21px; border-left: 1px solid #d9d9d9; display: grid; place-items: center; }
.crumbs .refresh svg { stroke-width: 1.5; }
.find { width: 202px; flex: none; height: 23px; border: 1px solid #d9d9d9; display: flex; align-items: center; padding: 0 7px 0 8px; }
.find input { flex: 1; min-width: 0; padding-bottom: 1px; }
.find input::placeholder { color: #6d6d6d; opacity: 1; }
.find svg { stroke-width: 1.5; }

.body { flex: 1; display: flex; min-height: 0; }
.tree { width: 155px; display: flex; flex: none; }
.tree ul { width: 139px; padding-top: 1px; overflow: hidden; }
.tree li { height: 24px; padding-left: 32px; }
.tree .sub { padding-left: 40px; }
.tree .current { background: #d9d9d9; }
.tree a { display: flex; align-items: center; gap: 5px; height: 24px; padding-bottom: 2px; white-space: nowrap; }
.vscroll { width: 15px; margin-left: 1px; background: #f0f0f0; color: #555; display: flex; flex-direction: column; align-items: center; padding: 6px 0 4px; }
.vthumb { width: 15px; height: 112px; background: #cdcdcd; margin-top: auto; margin-bottom: 14px; }
.listing { flex: 1; display: flex; flex-direction: column; margin-left: 5px; min-width: 0; }
table { border-collapse: collapse; table-layout: fixed; width: calc(100% - 23px); margin-left: 15px; }
.cdate { width: 144px; }
.ctype { width: 120px; }
.csize { width: 80px; }
th { height: 29px; padding: 0 0 2px 6px; text-align: left; font-weight: 400; color: #4c607a; border-right: 1px solid #e5e5e5; position: relative; }
th:first-child, td:first-child { padding-left: 2px; }
.sort { position: absolute; left: 122px; top: 0; color: #888; }
thead::after { content: ""; display: block; height: 3px; }
td { height: 22px; padding: 0 0 2px 6px; color: #6d7278; background: #e5f3ff; white-space: nowrap; }
.name { display: flex; align-items: center; gap: 5px; color: #111; }
td.num { text-align: right; padding-right: 7px; }
.hscroll { margin-top: auto; margin-bottom: 1px; height: 15px; display: flex; align-items: center; background: #f0f0f0; color: #444; gap: 5px; padding: 0 5px 0 4px; }
.hthumb { flex: 1; height: 15px; background: #cdcdcd; }
.status { height: 24px; flex: none; display: flex; align-items: center; padding: 0 4px 0 14px; color: #26366f; }
.status span { margin-right: auto; }
.status button { width: 22px; height: 22px; display: grid; place-items: center; }
.status .chosen { background: #cce8ff; border: 1px solid #26a0da; }

.taskbar { position: relative; height: 40px; flex: none; display: flex; background: linear-gradient(90deg, #001820, #00101c 60%, #000818); color: #fff; }
.taskbar button { display: grid; place-items: center; }
.start { width: 48px; }
.tasksearch { width: 288px; background: #f0f0f0; border: 1px solid #d0d0d0; border-top-color: #eee; border-right: 0; display: flex; align-items: center; padding-left: 10px; color: #333; }
.tasksearch .i20 { fill: none; stroke: #222; stroke-width: 1.5; }
.tasksearch input { flex: 1; min-width: 0; margin-left: 8px; font-size: 14px; line-height: 20px; }
.tasksearch input::placeholder { color: #444; opacity: 1; }
.bear { width: 80px; height: 38px; }
.apps { display: flex; gap: 1px; }
.apps button { width: 48px; height: 40px; }
.apps .taskview { margin-right: 2px; }
.apps .active { background: #314450; border-bottom: 2px solid #76b9ed; }
.apps .chrome { width: 40px; margin-left: 4px; background: linear-gradient(90deg, #296e3c 17px, #293b45 17px); border-bottom: 2px solid #50df35; }
.tray { margin-left: auto; display: flex; align-items: center; }
.tray button { width: 24px; height: 40px; }
.tray svg { width: 16px; height: 16px; fill: none; stroke: #fff; }
.tray time { width: 64px; text-align: center; line-height: 18px; }
.tray .note { width: 40px; }
.tray .peek { width: 5px; height: 40px; border-left: 1px solid #5a6470; margin-left: 8px; }
```
